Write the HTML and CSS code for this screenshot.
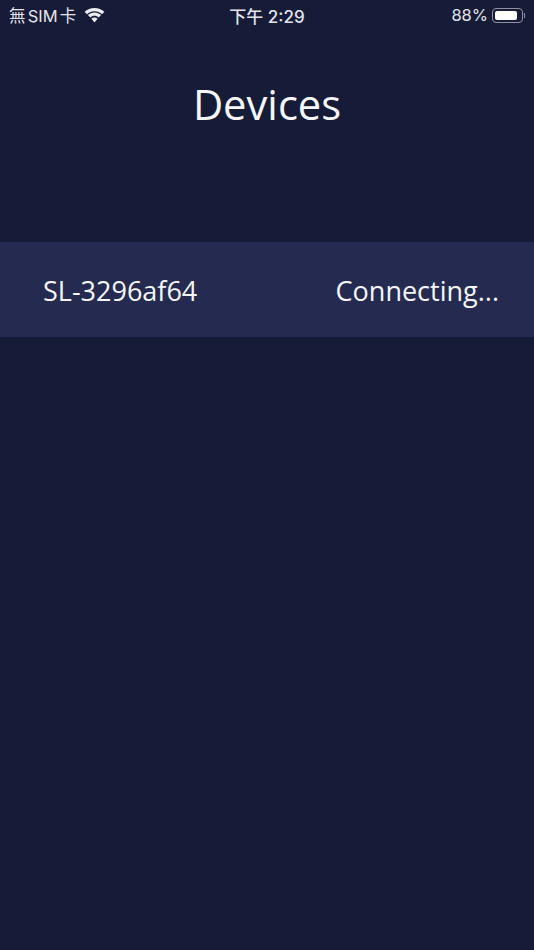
FILE: index.html
```html
<!DOCTYPE html>
<html lang="en">
<head>
    <meta charset="UTF-8">
    <meta name="viewport" content="width=device-width, initial-scale=1.0">
    <title>Devices</title>
    <link rel="stylesheet" href="styles.css">
</head>
<body>
    <!-- Status Bar -->
    <div class="status-bar">
        <div class="status-left">
            <span class="carrier">無 SIM 卡</span>
            <svg class="wifi-icon" width="21" height="15" viewBox="0 0 21 15">
                <path fill="#ecedf1" d="M10.500 3.200c2.900 0 5.500 1.100 7.500 3l2.400-2.500C17.800 1.400 14.300 0 10.500 0S3.200 1.400.600 3.700L3 6.200c2-1.900 4.600-3 7.500-3z"/>
                <path fill="#ecedf1" d="M10.500 7.800c1.600 0 3 .6 4.200 1.600l2.400-2.500c-1.800-1.600-4.100-2.500-6.600-2.500s-4.800.9-6.600 2.500l2.400 2.500c1.200-1 2.600-1.600 4.200-1.600z"/>
                <path fill="#ecedf1" d="M10.500 9.600c-1.200 0-2.200.4-3.100 1.200l3.100 3.600 3.100-3.600c-.9-.8-1.900-1.200-3.100-1.200z"/>
            </svg>
        </div>
        <div class="status-time">下午 2:29</div>
        <div class="status-right">
            <span>88%</span>
            <div class="battery"><div class="battery-level"></div></div>
            <div class="battery-cap"></div>
        </div>
    </div>

    <!-- Title -->
    <h1 class="page-title">Devices</h1>

    <!-- Device List -->
    <div class="device-row">
        <span>SL-3296af64</span>
        <span>Connecting...</span>
    </div>
</body>
</html>
```

FILE: styles.css
```css
body {
    font-family: "Open Sans", sans-serif;
    background-color: #161b37;
    color: #f5f6f8;
    margin: 0;
    padding: 0;
    height: 950px;
    overflow: hidden;
}

/* Status Bar */
.status-bar {
    display: grid;
    grid-template-columns: 1fr auto 1fr;
    align-items: center;
    height: 30px;
    padding: 0 9px;
    font-family: Inter, "Noto Sans CJK TC", sans-serif;
    font-size: 16.5px;
    color: #e3e4ea;
}

.status-left {
    display: flex;
    align-items: center;
    gap: 8px;
}

.carrier {
    word-spacing: -2.5px;
}

.status-time {
    font-size: 17px;
    font-weight: 500;
}

.status-right {
    display: flex;
    align-items: center;
    justify-content: flex-end;
}

.battery {
    box-sizing: border-box;
    width: 31px;
    height: 15px;
    margin-left: 4px;
    padding: 2px;
    border: 1px solid #8f91a3;
    border-radius: 4px;
}

.battery-level {
    width: 88%;
    height: 100%;
    background-color: #fff;
    border-radius: 2px;
}

.battery-cap {
    width: 1px;
    height: 5px;
    margin-left: 1px;
    background-color: #8f91a3;
}

/* Title */
.page-title {
    margin: 47px 0 0;
    height: 165px;
    font-size: 41.7px;
    font-weight: 400;
    line-height: 54px;
    text-align: center;
}

/* Device List */
.device-row {
    box-sizing: border-box;
    display: flex;
    justify-content: space-between;
    align-items: center;
    height: 95px;
    padding: 2px 35px 0 43px;
    background-color: #252b50;
    font-size: 27px;
}
```
